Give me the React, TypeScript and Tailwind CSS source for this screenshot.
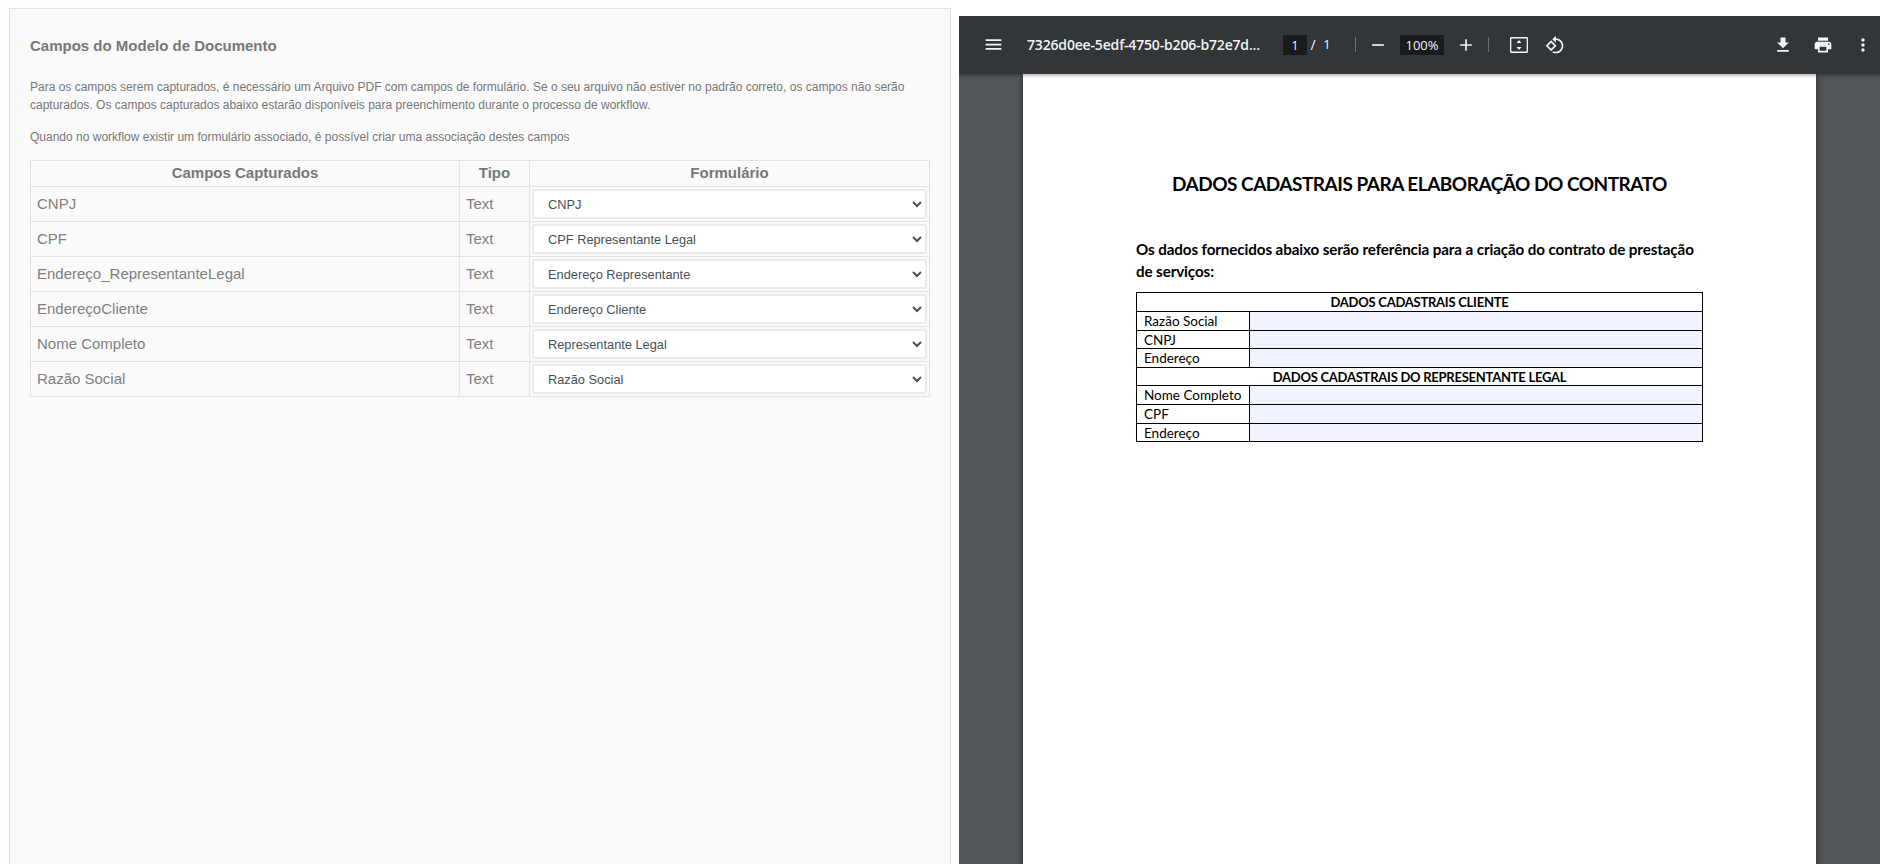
const rows = [
  ["CNPJ", "CNPJ"],
  ["CPF", "CPF Representante Legal"],
  ["Endereço_RepresentanteLegal", "Endereço Representante"],
  ["EndereçoCliente", "Endereço Cliente"],
  ["Nome Completo", "Representante Legal"],
  ["Razão Social", "Razão Social"],
];

const IconButton = ({ d, className }: { d: string; className: string }) => (
  <svg viewBox="0 0 24 24" className={`w-5 h-5 shrink-0 fill-[#f1f3f4] ${className}`}>
    <path d={d} />
  </svg>
);

const Divider = ({ className }: { className: string }) => (
  <div className={`w-px h-[15px] bg-[#6a6e71] shrink-0 ${className}`}></div>
);

const Toolbar = () => (
  <div className="relative z-10 h-[58px] pb-px shrink-0 flex items-center bg-[#323639] shadow-[0_1px_4px_rgba(0,0,0,0.4)] text-[#f1f3f4] font-['Open_Sans',sans-serif]">
    <svg viewBox="0 0 24 24" className="ml-6 w-[21px] h-[21px] shrink-0 fill-[#f1f3f4]">
      <path d="M3 18h18v-2H3v2zm0-5h18v-2H3v2zm0-7v2h18V6H3z" />
    </svg>
    <div className="ml-[23px] w-[256px] shrink-0 text-[14px] font-semibold tracking-[-0.17px] whitespace-nowrap">7326d0ee-5edf-4750-b206-b72e7d...</div>
    <div className="w-6 h-5 shrink-0 bg-[#191b1c] text-[13px] leading-5 text-center">1</div>
    <div className="w-[12px] shrink-0 text-[14px] text-center">/</div>
    <div className="ml-[2px] w-[12px] shrink-0 text-[13px] text-center">1</div>
    <Divider className="ml-[22px]" />
    <IconButton className="ml-[12px]" d="M19 13H5v-2h14v2z" />
    <div className="ml-[12px] w-11 h-5 shrink-0 bg-[#191b1c] text-[13px] leading-5 text-center">100%</div>
    <IconButton className="ml-[12px]" d="M19 13h-6v6h-2v-6H5v-2h6V5h2v6h6v2z" />
    <Divider className="ml-[12px]" />
    <svg viewBox="0 0 24 24" className="ml-[20px] w-5 h-5 shrink-0 fill-[#f1f3f4]">
      <path d="M2.500 2.500h19A1.300 1.300 0 0 1 22.800 3.800v16.400A1.300 1.300 0 0 1 21.500 21.500h-19a1.300 1.300 0 0 1-1.300-1.300V3.800A1.300 1.300 0 0 1 2.500 2.500zm.3 1.600v15.800h18.400V4.100H2.800z" />
      <path d="M12 6l3 3.500H9L12 6zM12 18l-3-3.500h6L12 18z" />
    </svg>
    <IconButton className="ml-[16px]" d="M7.34 6.41L.86 12.9l6.49 6.48 6.49-6.48-6.5-6.49zM3.69 12.9l3.66-3.66L11 12.9l-3.66 3.66-3.65-3.66zm15.67-6.26C17.61 4.88 15.3 4 13 4V.76L8.76 5 13 9.24V6c1.790 0 3.580.680 4.950 2.050 2.730 2.730 2.730 7.170 0 9.900C16.580 19.320 14.790 20 13 20c-.970 0-1.940-.210-2.840-.610l-1.490 1.490C10.020 21.620 11.510 22 13 22c2.300 0 4.610-.880 6.360-2.640 3.520-3.510 3.520-9.210 0-12.720z" />
    <div className="flex-1"></div>
    <IconButton d="M19 9h-4V3H9v6H5l7 7 7-7zM5 18v2h14v-2H5z" />
    <IconButton className="ml-[20px]" d="M19 8H5c-1.660 0-3 1.340-3 3v6h4v4h12v-4h4v-6c0-1.660-1.340-3-3-3zm-3 11H8v-5h8v5zm3-7c-.550 0-1-.450-1-1s.450-1 1-1 1 .450 1 1-.450 1-1 1zm-1-9H6v4h12V3z" />
    <IconButton className="ml-[20px] mr-[7px]" d="M12 8c1.100 0 2-.900 2-2s-.900-2-2-2-2 .900-2 2 .900 2 2 2zm0 2c-1.100 0-2 .900-2 2s.900 2 2 2 2-.900 2-2-.900-2-2-2zm0 6c-1.100 0-2 .900-2 2s.900 2 2 2 2-.900 2-2-.900-2-2-2z" />
  </div>
);

const PdfRow = ({ label, h }: { label: string; h: string }) => (
  <div className={`flex border-b border-black ${h}`}>
    <div className="w-[113px] shrink-0 border-r border-black pl-[7px] text-[13.5px] leading-[18px] whitespace-nowrap">{label}</div>
    <div className="flex-1 bg-[#f0f2fe]"></div>
  </div>
);

const PdfHeader = ({ label, h }: { label: string; h: string }) => (
  <div className={`border-b border-black text-center text-[13px] tracking-[-0.25px] font-bold leading-[18px] ${h}`}>{label}</div>
);

const PdfPage = () => (
  <div className="w-[793px] h-[900px] shrink-0 bg-white px-[113px] pt-[97px] text-black font-['Lato',sans-serif] shadow-[0_0_6px_rgba(0,0,0,0.5)]">
    <h1 className="text-center text-[19px] tracking-[-0.5px] font-bold leading-[26px] whitespace-nowrap">DADOS CADASTRAIS PARA ELABORAÇÃO DO CONTRATO</h1>
    <p className="mt-[42px] text-[15.2px] tracking-[-0.11px] font-bold leading-[21.5px]">Os dados fornecidos abaixo serão referência para a criação do contrato de prestação de serviços:</p>
    <div className="mt-[10px] border-t border-x border-black">
      <PdfHeader label="DADOS CADASTRAIS CLIENTE" h="h-[19px]" />
      <PdfRow label="Razão Social" h="h-[19px]" />
      <PdfRow label="CNPJ" h="h-[18px]" />
      <PdfRow label="Endereço" h="h-[19px]" />
      <PdfHeader label="DADOS CADASTRAIS DO REPRESENTANTE LEGAL" h="h-[18px]" />
      <PdfRow label="Nome Completo" h="h-[19px]" />
      <PdfRow label="CPF" h="h-[19px]" />
      <PdfRow label="Endereço" h="h-[18px]" />
    </div>
  </div>
);

export default function App() {
  return (
    <div className="h-screen w-full flex overflow-hidden bg-white font-['Liberation_Sans',sans-serif]">
      <div className="w-[951px] shrink-0 pt-2 pl-[9px] bg-[#fdfdfd]">
        <div className="h-full bg-[#fafafa] border-t border-x border-[#e3e3e3] pl-5 pr-5 pt-[28px] text-[#777777]">
          <h2 className="text-[15px] font-bold leading-[18px]">Campos do Modelo de Documento</h2>
          <p className="mt-[23px] text-[12px] leading-[18px]">
            Para os campos serem capturados, é necessário um Arquivo PDF com campos de formulário. Se o seu arquivo não estiver no padrão correto, os campos não serão capturados. Os campos capturados abaixo estarão disponíveis para preenchimento durante o processo de workflow.
          </p>
          <p className="mt-[14px] text-[12px] leading-[18px]">Quando no workflow existir um formulário associado, é possível criar uma associação destes campos</p>
          <table className="mt-[14px] w-[900px] table-fixed border-collapse border border-[#e3e3e3] text-[15px]">
            <colgroup>
              <col className="w-[429px]" />
              <col className="w-[70px]" />
              <col />
            </colgroup>
            <thead>
              <tr className="h-[26px]">
                <th className="border border-[#e3e3e3] pb-px font-bold leading-[18px]">Campos Capturados</th>
                <th className="border border-[#e3e3e3] pb-px font-bold leading-[18px]">Tipo</th>
                <th className="border border-[#e3e3e3] pb-px font-bold leading-[18px]">Formulário</th>
              </tr>
            </thead>
            <tbody>
              {rows.map(([campo, formulario]) => (
                <tr key={campo} className="h-[35px]">
                  <td className="border border-[#e3e3e3] px-[6px] text-[#808080]">{campo}</td>
                  <td className="border border-[#e3e3e3] px-[6px] text-[#808080]">Text</td>
                  <td className="border border-[#e3e3e3] p-[2px]">
                    <select
                      defaultValue={formulario}
                      className="block w-full h-[30px] pl-[10px] bg-white border-[2px] border-[#e8ebef] rounded-[3px] text-[12.8px] text-[#495057]"
                    >
                      <option>{formulario}</option>
                    </select>
                  </td>
                </tr>
              ))}
            </tbody>
          </table>
        </div>
      </div>
      <div className="flex-1 min-w-0 pl-2 pt-4">
        <div className="h-full flex flex-col bg-[#525659] overflow-hidden">
          <Toolbar />
          <div className="flex justify-center">
            <PdfPage />
          </div>
        </div>
      </div>
    </div>
  );
}
